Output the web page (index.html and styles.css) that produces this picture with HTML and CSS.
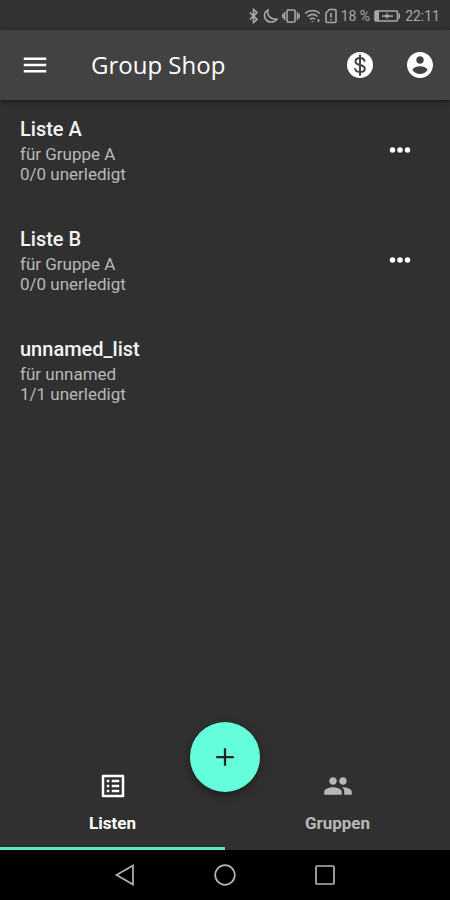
FILE: index.html
```
<!DOCTYPE html>
<html lang="de">
<head>
	<meta charset="utf-8">
	<meta name="viewport" content="width=device-width, initial-scale=1">
	<title>Group Shop</title>
	<link rel="stylesheet" href="styles.css">
</head>
<body>
	<div class="status-bar">
		<svg class="status-icon" width="10" height="16" viewBox="0 0 10 16"><path d="M1 4.500l7 7-3.500 3V1.500l3.500 3-7 7"/></svg>
		<svg class="status-icon" width="15" height="16" viewBox="0 0 15 16"><path d="M5 2C3.500 6.500 7 12 14 11.200 11 15 5 15 2.500 11 .5 7.500 1.500 3.500 5 2z"/></svg>
		<svg class="status-icon" width="18" height="16" viewBox="0 0 18 16"><rect x="5" y="2" width="8" height="12" rx="1"/><path d="M2.500 4v8M15.500 4v8M.7 6v4M17.300 6v4"/></svg>
		<svg class="status-icon" width="17" height="16" viewBox="0 0 17 16"><path d="M1 5.500c4.500-4 10.500-4 15 0M3.500 8.500c3-2.600 7-2.600 10 0M6 11.300c1.500-1.300 3.500-1.300 5 0M8.500 13v1M14.500 11v3"/></svg>
		<svg class="status-icon" width="12" height="16" viewBox="0 0 12 16"><path d="M1 5l3.500-3.500H10a1 1 0 0 1 1 1v11a1 1 0 0 1-1 1H2a1 1 0 0 1-1-1zM6 5v4.500M6 11v1.500"/></svg>
		<span class="battery-level">18 %</span>
		<svg class="status-icon" width="27" height="16" viewBox="0 0 27 16"><rect x="1" y="3" width="22.500" height="10" rx="1"/><path class="solid" d="M1 3h4v10H1zM24.500 5.500H26v5h-1.500zM8 7.400l4-.4 1-2.500 1 2.500 5 .4v1.400L14 9l-1 2.500L12 9l-4-.2z"/></svg>
		<span class="time">22:11</span>
	</div>

	<header class="app-bar">
		<button class="icon-btn" type="button" aria-label="Menü">
			<svg class="icon" viewBox="0 0 24 24"><path d="M3 18h18v-2H3v2zm0-5h18v-2H3v2zm0-7v2h18V6H3z"/></svg>
		</button>
		<h1 class="app-title">Group Shop</h1>
		<button class="icon-btn" type="button" aria-label="Ausgaben">
			<svg class="icon" viewBox="0 0 24 24"><circle cx="12" cy="12" r="10.400"/><path class="dollar" d="M12 3.500v17M15.700 9.300C15.400 7.500 14 6.400 12 6.400c-2.200 0-3.600 1.200-3.600 2.800 0 1.700 1.600 2.300 3.600 2.800s3.800 1.100 3.800 2.900c0 1.600-1.600 2.700-3.800 2.700-2.300 0-3.800-1.100-4-3"/></svg>
		</button>
		<button class="icon-btn" type="button" aria-label="Profil">
			<svg class="icon" viewBox="0 0 24 24"><path d="M12 1.600C6.300 1.600 1.600 6.300 1.600 12S6.300 22.400 12 22.400 22.400 17.700 22.400 12 17.700 1.600 12 1.600zM12 5c1.660 0 3 1.340 3 3s-1.340 3-3 3-3-1.340-3-3 1.340-3 3-3zm0 14.200c-2.500 0-4.710-1.280-6-3.220.03-1.990 4-3.080 6-3.080 1.990 0 5.970 1.090 6 3.080-1.290 1.940-3.500 3.220-6 3.220z"/></svg>
		</button>
	</header>

	<main class="content">
		<ul class="lists">
			<li class="list-item">
				<div class="list-text">
					<h2 class="list-name">Liste A</h2>
					<p>für Gruppe A</p>
					<p>0/0 unerledigt</p>
				</div>
				<button class="icon-btn" type="button" aria-label="Optionen Liste A">
					<svg class="icon" viewBox="0 0 24 24"><circle cx="6" cy="12" r="2.200"/><circle cx="12" cy="12" r="2.200"/><circle cx="18" cy="12" r="2.200"/></svg>
				</button>
			</li>
			<li class="list-item">
				<div class="list-text">
					<h2 class="list-name">Liste B</h2>
					<p>für Gruppe A</p>
					<p>0/0 unerledigt</p>
				</div>
				<button class="icon-btn" type="button" aria-label="Optionen Liste B">
					<svg class="icon" viewBox="0 0 24 24"><circle cx="6" cy="12" r="2.200"/><circle cx="12" cy="12" r="2.200"/><circle cx="18" cy="12" r="2.200"/></svg>
				</button>
			</li>
			<li class="list-item">
				<div class="list-text">
					<h2 class="list-name">unnamed_list</h2>
					<p>für unnamed</p>
					<p>1/1 unerledigt</p>
				</div>
			</li>
		</ul>
	</main>

	<nav class="tabs">
		<a class="tab active" href="#listen">
			<svg class="icon" viewBox="0 0 24 24"><path d="M19 5v14H5V5h14m1.100-2H3.900c-.5 0-.9.4-.9.9v16.200c0 .4.4.9.9.9h16.200c.4 0 .9-.5.9-.9V3.900c0-.5-.5-.9-.9-.9zM11 7h6v2h-6V7zm0 4h6v2h-6v-2zm0 4h6v2h-6zM7 7h2v2H7zm0 4h2v2H7zm0 4h2v2H7z"/></svg>
			<span>Listen</span>
		</a>
		<a class="tab" href="#gruppen">
			<svg class="icon" viewBox="0 0 24 24"><path d="M16 11c1.660 0 2.990-1.340 2.990-3S17.660 5 16 5c-1.660 0-3 1.340-3 3s1.340 3 3 3zm-8 0c1.660 0 2.990-1.340 2.990-3S9.660 5 8 5C6.340 5 5 6.340 5 8s1.340 3 3 3zm0 2c-2.330 0-7 1.170-7 3.500V19h14v-2.500c0-2.330-4.670-3.500-7-3.500zm8 0c-.29 0-.62.02-.97.05 1.160.84 1.970 1.970 1.970 3.450V19h6v-2.500c0-2.330-4.670-3.500-7-3.500z"/></svg>
			<span>Gruppen</span>
		</a>
		<button class="fab" type="button" aria-label="Neue Liste">
			<svg class="icon" viewBox="0 0 24 24"><path d="M19 12.900h-6.100V19h-1.800v-6.100H5v-1.800h6.100V5h1.800v6.100H19z"/></svg>
		</button>
	</nav>

	<div class="system-nav">
		<button class="system-btn" type="button" aria-label="Zurück">
			<svg width="24" height="24" viewBox="0 0 24 24"><path d="M20 2.500v19L3.500 12z"/></svg>
		</button>
		<button class="system-btn" type="button" aria-label="Home">
			<svg width="24" height="24" viewBox="0 0 24 24"><circle cx="12" cy="12" r="9.800"/></svg>
		</button>
		<button class="system-btn" type="button" aria-label="Übersicht">
			<svg width="24" height="24" viewBox="0 0 24 24"><rect x="3" y="3" width="18" height="18" rx="1"/></svg>
		</button>
	</div>
</body>
</html>
```
FILE: styles.css
```
* {
	margin: 0;
	padding: 0;
	box-sizing: border-box;
}
body {
	display: flex;
	flex-direction: column;
	min-height: 100vh;
	font-family: Roboto, Arial, sans-serif;
	color: #fff;
	background-color: #303030;
}
ul {
	list-style: none;
}
button {
	border: none;
	background: none;
	color: inherit;
	cursor: pointer;
}
a {
	color: inherit;
	text-decoration: none;
}
svg {
	display: block;
}
.icon {
	width: 30px;
	height: 30px;
	fill: currentColor;
}
.icon-btn {
	padding: 5px;
}

/* status bar */
.status-bar {
	display: flex;
	justify-content: flex-end;
	align-items: center;
	gap: 4px;
	height: 30px;
	padding: 2px 10px 0;
	font-size: 14px;
	color: #a8a8a8;
	background-color: #333;
}
.status-icon {
	fill: none;
	stroke: currentColor;
	stroke-width: 1.6;
}
.status-icon .solid {
	fill: currentColor;
	stroke: none;
}

/* app bar */
.app-bar {
	display: flex;
	align-items: center;
	gap: 20px;
	height: 70px;
	padding: 0 10px 0 15px;
	background-color: #424242;
	box-shadow: 0 1px 4px rgba(0, 0, 0, 0.6);
}
.app-bar .icon-btn:first-child {
	margin-right: 16px;
}
.app-title {
	flex: 1;
	font-family: "Open Sans", "Noto Sans", sans-serif;
	font-size: 24px;
	font-weight: 500;
	line-height: 30px;
}
.dollar {
	fill: none;
	stroke: #424242;
	stroke-width: 1.6;
}

/* lists */
.content {
	flex: 1;
}
.list-item {
	display: flex;
	justify-content: space-between;
	align-items: center;
	height: 110px;
	padding: 0 30px 10px 20px;
}
.list-text {
	font-size: 17px;
	line-height: 20px;
	color: #b8b8b8;
}
.list-name {
	margin-bottom: 3px;
	font-size: 20px;
	font-weight: 500;
	line-height: 24px;
	color: #f4f4f4;
}

/* bottom tabs */
.tabs {
	position: relative;
	display: flex;
	height: 90px;
}
.tab {
	display: flex;
	flex: 1;
	flex-direction: column;
	align-items: center;
	gap: 12px;
	padding-top: 11px;
	border-bottom: 3px solid transparent;
	font-size: 17px;
	font-weight: 700;
	line-height: 20px;
	color: #b8b8b8;
}
.tab.active {
	border-color: #62e2c4;
	color: #fff;
}
.fab {
	position: absolute;
	top: -38px;
	left: 50%;
	display: flex;
	justify-content: center;
	align-items: center;
	width: 70px;
	height: 70px;
	border-radius: 50%;
	background-color: #64ffda;
	color: #222;
	box-shadow: 0 3px 8px rgba(0, 0, 0, 0.4);
	transform: translateX(-50%);
}

/* system navigation */
.system-nav {
	display: flex;
	justify-content: center;
	gap: 56px;
	height: 50px;
	background-color: #000;
}
.system-btn {
	padding: 0 10px;
}
.system-btn svg {
	fill: none;
	stroke: #b4b4b4;
	stroke-width: 1.7;
}
```
